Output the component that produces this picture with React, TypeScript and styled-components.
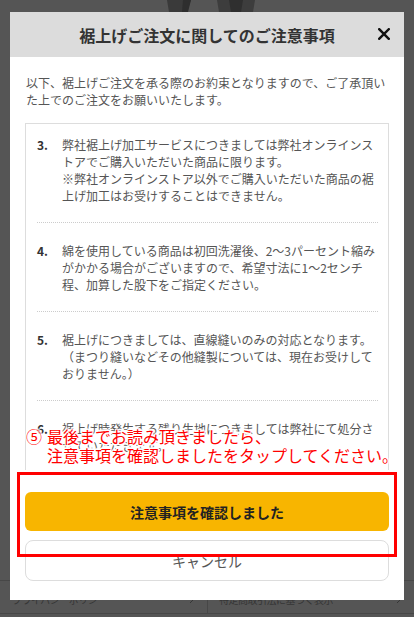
import React from "react";
import styled, { createGlobalStyle } from "styled-components";

const GlobalStyle = createGlobalStyle`
  html, body { margin: 0; padding: 0; }
  body {
    background: #555555;
    font-family: "Noto Sans CJK JP", "Noto Sans", sans-serif;
    width: 414px;
    height: 617px;
    overflow: hidden;
  }
`;

const Page = styled.div`
  position: relative;
  width: 414px;
  height: 617px;
  display: flex;
  flex-direction: column;
  background: #555555;
  overflow: hidden;
`;

const TopPhoto = styled.div`
  display: flex;
  justify-content: center;
  height: 12px;
`;

const Footer = styled.div`
  margin-top: auto;
  margin-bottom: 3px;
  height: 32px;
  border-top: 1px solid #474747;
  border-bottom: 1px solid #474747;
  display: grid;
  grid-template-columns: 1fr 1fr;
`;

const FooterLink = styled.div<{ $divider?: boolean }>`
  display: flex;
  align-items: center;
  justify-content: space-between;
  padding: 4px 12px 0 ${(p) => (p.$divider ? "11px" : "12px")};
  border-left: ${(p) => (p.$divider ? "1px solid #474747" : "none")};
  font-size: 10px;
  color: #363636;
  letter-spacing: -0.5px;
`;

const Modal = styled.div`
  position: absolute;
  left: 10px;
  top: 12px;
  width: 394px;
  height: 588px;
  background: #ffffff;
  display: flex;
  flex-direction: column;
`;

const Header = styled.div`
  position: relative;
  height: 45px;
  flex: none;
  background: #dcdcdc;
  display: flex;
  align-items: center;
  justify-content: center;
`;

const Title = styled.h1`
  margin: 0;
  font-size: 16px;
  font-weight: 700;
  color: #333333;
  line-height: 1;
  padding-top: 1px;
`;

const CloseButton = styled.button`
  position: absolute;
  right: 13px;
  top: 15px;
  width: 14px;
  height: 14px;
  padding: 0;
  border: none;
  background: transparent;
  display: flex;
  align-items: center;
  justify-content: center;
`;

const Body = styled.div`
  flex: 1;
  min-height: 0;
  display: flex;
  flex-direction: column;
  padding: 17px 15px 19px 15px;
`;

const Intro = styled.p`
  margin: 0 0 15px 1px;
  font-size: 12px;
  line-height: 17px;
  color: #555555;
  white-space: nowrap;
`;

const ListBox = styled.div`
  flex: 1;
  min-height: 0;
  border: 1px solid #dddddd;
  border-bottom: none;
  overflow: hidden;
  padding: 0 10px 0 11px;
`;

const Item = styled.div<{ $first?: boolean }>`
  display: grid;
  grid-template-columns: 25px 1fr;
  padding: ${(p) => (p.$first ? "12px" : "19px")} 0 18px 0;
  border-bottom: 1px dotted #cccccc;
`;

const Num = styled.span`
  font-size: 12px;
  line-height: 17px;
  font-weight: 700;
  color: #333333;
`;

const ItemText = styled.div`
  font-size: 12px;
  line-height: 17px;
  color: #555555;
  white-space: nowrap;
`;

const PrimaryButton = styled.button`
  flex: none;
  margin-top: 22px;
  height: 39px;
  border: none;
  border-radius: 6px;
  background: #f8b500;
  color: #222222;
  font-family: inherit;
  font-size: 14px;
  font-weight: 700;
  display: flex;
  align-items: center;
  justify-content: center;
`;

const CancelButton = styled.button`
  flex: none;
  margin-top: 9px;
  height: 41px;
  border: 1px solid #dddddd;
  border-radius: 8px;
  background: #ffffff;
  color: #555555;
  font-family: inherit;
  font-size: 14px;
  display: flex;
  align-items: center;
  justify-content: center;
`;

const Highlight = styled.div`
  position: absolute;
  left: 17px;
  top: 472px;
  width: 380px;
  height: 85px;
  box-sizing: border-box;
  border: 3px solid #ff0000;
  pointer-events: none;
`;

const Note = styled.div`
  position: absolute;
  left: 26px;
  top: 427px;
  font-size: 16px;
  line-height: 19px;
  color: #ff0000;
  white-space: nowrap;
  text-shadow:
    0 0 2px #fff, 0 0 2px #fff, 1px 1px 0 #fff, -1px -1px 0 #fff,
    1px -1px 0 #fff, -1px 1px 0 #fff, 0 2px 1px #fff, 0 -2px 1px #fff;
`;

const NoteLine = styled.div<{ $indent?: boolean }>`
  padding-left: ${(p) => (p.$indent ? "21px" : "0")};
`;

const Mark = styled.span`
  display: inline-block;
  width: 21px;
`;

const items: { n: string; lines: string[] }[] = [
  {
    n: "3.",
    lines: [
      "弊社裾上げ加工サービスにつきましては弊社オンラインス",
      "トアでご購入いただいた商品に限ります。",
      "※弊社オンラインストア以外でご購入いただいた商品の裾",
      "上げ加工はお受けすることはできません。",
    ],
  },
  {
    n: "4.",
    lines: [
      "綿を使用している商品は初回洗濯後、2〜3パーセント縮み",
      "がかかる場合がございますので、希望寸法に1〜2センチ",
      "程、加算した股下をご指定ください。",
    ],
  },
  {
    n: "5.",
    lines: [
      "裾上げにつきましては、直線縫いのみの対応となります。",
      "（まつり縫いなどその他縫製については、現在お受けして",
      "おりません。）",
    ],
  },
  {
    n: "6.",
    lines: [
      "裾上げ時発生する残り生地につきましては弊社にて処分さ",
      "せていただきます。",
      "",
    ],
  },
];

const Chevron = () => (
  <svg width="6" height="9" viewBox="0 0 6 9">
    <path d="M1 1l3.5 3.5L1 8" fill="none" stroke="#363636" strokeWidth="1" />
  </svg>
);

export default function App() {
  return (
    <>
      <GlobalStyle />
      <Page>
        <TopPhoto>
          <svg width="100" height="12" viewBox="0 0 100 12">
            <rect x="0" y="0" width="100" height="12" fill="#555" />
            <path d="M10 0h24l-4 12H12z" fill="#3a3a3a" />
            <path d="M26 0h8l-3 12h-6z" fill="#2e2e2e" />
            <path d="M60 0h38l-2 12H62z" fill="#3d3d3d" />
            <path d="M72 0h14l-2 12H74z" fill="#2f2f2f" />
          </svg>
        </TopPhoto>
        <Footer>
          <FooterLink>
            <span>プライバシーポリシー</span>
            <Chevron />
          </FooterLink>
          <FooterLink $divider>
            <span>特定商取引法に基づく表示</span>
            <Chevron />
          </FooterLink>
        </Footer>

        <Modal>
          <Header>
            <Title>裾上げご注文に関してのご注意事項</Title>
            <CloseButton aria-label="閉じる">
              <svg width="12" height="12" viewBox="0 0 12 12">
                <path d="M1.2 1.2l9.6 9.6M10.8 1.2l-9.6 9.6" stroke="#111" strokeWidth="2.4" strokeLinecap="square" />
              </svg>
            </CloseButton>
          </Header>
          <Body>
            <Intro>
              以下、裾上げご注文を承る際のお約束となりますので、ご了承頂い
              <br />
              た上でのご注文をお願いいたします。
            </Intro>
            <ListBox>
              {items.map((it, i) => (
                <Item key={it.n} $first={i === 0}>
                  <Num>{it.n}</Num>
                  <ItemText>
                    {it.lines.map((l, j) => (
                      <div key={j}>{l || "\u00a0"}</div>
                    ))}
                  </ItemText>
                </Item>
              ))}
            </ListBox>
            <PrimaryButton>注意事項を確認しました</PrimaryButton>
            <CancelButton>キャンセル</CancelButton>
          </Body>
        </Modal>

        <Note>
          <NoteLine>
            <Mark>⑤</Mark>最後までお読み頂きましたら、
          </NoteLine>
          <NoteLine $indent>注意事項を確認しましたをタップしてください。</NoteLine>
        </Note>
        <Highlight />
      </Page>
    </>
  );
}
